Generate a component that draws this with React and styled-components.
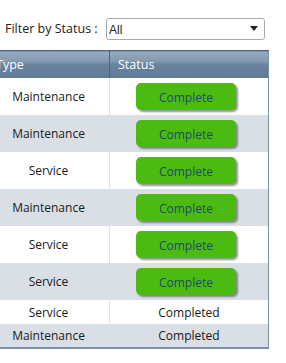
import React, { useState } from "react"
import styled, { createGlobalStyle } from "styled-components"

const rows = [
	{ type: "Maintenance", done: false },
	{ type: "Maintenance", done: false },
	{ type: "Service", done: false },
	{ type: "Maintenance", done: false },
	{ type: "Service", done: false },
	{ type: "Service", done: false },
	{ type: "Service", done: true },
	{ type: "Maintenance", done: true },
]

const App = () => {
	const [status, setStatus] = useState("All")
	return (
		<Page>
			<GlobalStyle />
			<FilterBar>
				<Label>Filter by Status :</Label>
				<SelectBox>
					<Select value={status} onChange={e => setStatus(e.target.value)}>
						<option>All</option>
						<option>Complete</option>
						<option>Completed</option>
					</Select>
					<Caret />
				</SelectBox>
			</FilterBar>
			<Grid>
				<thead>
					<tr>
						<Th>Type</Th>
						<Th>Status</Th>
					</tr>
				</thead>
				<tbody>
					{rows.map((row, i) =>
						<Row key={i} $alt={i % 2 == 1} $tall={!row.done}>
							<Td>{row.type}</Td>
							<Td>
								{row.done ? "Completed" : <CompleteButton>Complete</CompleteButton>}
							</Td>
						</Row>)}
				</tbody>
			</Grid>
		</Page>
	)
}

const GlobalStyle = createGlobalStyle`
	body {
		margin: 0;
		background: #fff;
		font-family: "Open Sans", "Noto Sans", sans-serif;
		overflow: hidden;
	}
`

const Page = styled.div`
	width: 286px;
	height: 363px;
`

const FilterBar = styled.div`
	display: flex;
	align-items: center;
	padding: 17px 0 0 5px;
	height: 22px;
`

const Label = styled.div`
	font-size: 12.5px;
	color: #222;
	width: 101px;
`

const SelectBox = styled.div`
	position: relative;
	width: 159px;
	height: 22px;
`

const Select = styled.select`
	appearance: none;
	width: 100%;
	height: 100%;
	box-sizing: border-box;
	border: 1px solid #a9a9a9;
	border-radius: 3px;
	background: #fff;
	padding: 2px 0 0 2px;
	font-family: "Liberation Sans", Arial, sans-serif;
	font-size: 12px;
	color: #222;
	outline: none;
`

const Caret = styled.span`
	position: absolute;
	right: 7px;
	top: 9px;
	border-left: 4px solid transparent;
	border-right: 4px solid transparent;
	border-top: 5px solid #222;
	pointer-events: none;
`

const Grid = styled.table`
	margin: 11px 0 0 -12px;
	width: 281px;
	border-collapse: collapse;
	table-layout: fixed;
	border-right: 1px solid #7a91a8;
	border-bottom: 2px solid #7a91a8;
	font-size: 12px;
	color: #1a1a1a;
`

const Th = styled.th`
	height: 27px;
	padding: 0 0 0 8px;
	text-align: left;
	font-weight: normal;
	color: #fff;
	font-size: 12.5px;
	border-top: 1px solid #4e6680;
	border-left: 1px solid #4d6580;
	background: linear-gradient(#98acc0 0%, #7f97ae 40%, #6b85a0 45%, #5f7a96 100%);
	&:first-child {
		width: 113px;
		border-left: none;
	}
`

const Row = styled.tr`
	height: ${p => p.$tall ? "37px" : "24px"};
	background: ${p => p.$alt ? "#d9dfe5" : "#fff"};
`

const Td = styled.td`
	padding: 0;
	text-align: center;
	vertical-align: middle;
	&:last-child {
		border-left: 1px solid #dde2e7;
	}
`

const CompleteButton = styled.button`
	display: block;
	margin: 0 0 0 26px;
	width: 100px;
	height: 27px;
	border: none;
	border-radius: 5px;
	background: #4cbb11;
	color: #1d4a68;
	font-family: "Open Sans", "Noto Sans", sans-serif;
	font-size: 12px;
	padding-top: 3px;
	box-shadow: 2px 2px 2px rgba(60, 60, 60, 0.55);
	cursor: pointer;
`

export default App
